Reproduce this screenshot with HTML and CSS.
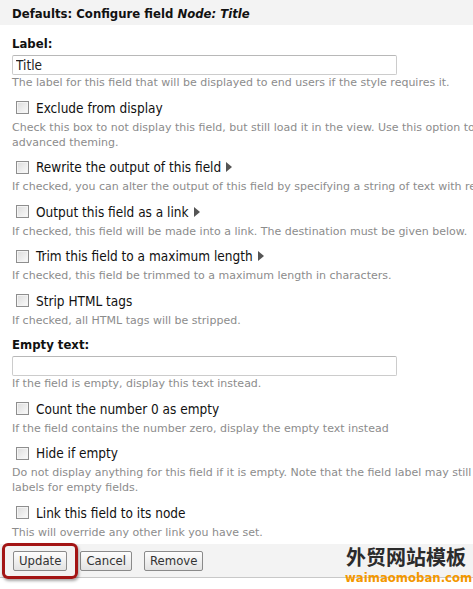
FILE: index.html
```html
<!DOCTYPE html>
<html>
<head>
  <meta charset="UTF-8">
  <title>Configure field</title>
  <link rel="stylesheet" href="styles.css">
</head>
<body>
  <div class="dialog">
    <div class="dialog-title">Defaults: Configure field <em>Node: Title</em></div>

    <div class="dialog-body">
      <div class="form-item">
        <label class="field-label">Label:</label>
        <input class="text-input" type="text" value="Title">
        <div class="help help-tight">The label for this field that will be displayed to end users if the style requires it.</div>
      </div>

      <div class="form-item">
        <label class="check-row"><span class="checkbox"></span>Exclude from display</label>
        <div class="help">Check this box to not display this field, but still load it in the view. Use this option to not show a grouping field in each record, or when doing<br>advanced theming.</div>
      </div>

      <div class="form-item">
        <label class="check-row"><span class="checkbox"></span>Rewrite the output of this field <span class="arrow"></span></label>
        <div class="help">If checked, you can alter the output of this field by specifying a string of text with replacement tokens that can use any existing field output.</div>
      </div>

      <div class="form-item">
        <label class="check-row"><span class="checkbox"></span>Output this field as a link <span class="arrow"></span></label>
        <div class="help">If checked, this field will be made into a link. The destination must be given below.</div>
      </div>

      <div class="form-item">
        <label class="check-row"><span class="checkbox"></span>Trim this field to a maximum length <span class="arrow"></span></label>
        <div class="help">If checked, this field be trimmed to a maximum length in characters.</div>
      </div>

      <div class="form-item">
        <label class="check-row"><span class="checkbox"></span>Strip HTML tags</label>
        <div class="help">If checked, all HTML tags will be stripped.</div>
      </div>

      <div class="form-item">
        <label class="field-label">Empty text:</label>
        <input class="text-input" type="text" value="">
        <div class="help help-tight">If the field is empty, display this text instead.</div>
      </div>

      <div class="form-item">
        <label class="check-row"><span class="checkbox"></span>Count the number 0 as empty</label>
        <div class="help">If the field contains the number zero, display the empty text instead</div>
      </div>

      <div class="form-item">
        <label class="check-row"><span class="checkbox"></span>Hide if empty</label>
        <div class="help">Do not display anything for this field if it is empty. Note that the field label may still be displayed. Check style or row style settings to hide<br>labels for empty fields.</div>
      </div>

      <div class="form-item">
        <label class="check-row"><span class="checkbox"></span>Link this field to its node</label>
        <div class="help">This will override any other link you have set.</div>
      </div>
    </div>

    <div class="dialog-buttons">
      <button class="btn btn-highlight">Update</button>
      <button class="btn">Cancel</button>
      <button class="btn">Remove</button>
      <div class="watermark">
        <div class="wm-cn">外贸网站模板</div>
        <div class="wm-en">waimaomoban.com</div>
      </div>
    </div>
  </div>
</body>
</html>
```

FILE: styles.css
```css
body {
  margin: 0;
  background: #fff;
  font-family: "DejaVu Sans Condensed", "DejaVu Sans", sans-serif;
  color: #111;
  overflow: hidden;
}

.dialog {
  width: 473px;
  height: 589px;
  overflow: hidden;
}

.dialog-title {
  height: 25px;
  line-height: 28px;
  background: #f3f3f3;
  padding-left: 12px;
  font-size: 13px;
  font-weight: bold;
  white-space: nowrap;
}

.dialog-body {
  padding: 10px 0 0 12px;
  height: 509px;
  overflow: hidden;
}

.form-item {
  margin-bottom: 8.5px;
}

.field-label {
  display: block;
  font-weight: bold;
  font-size: 13px;
  line-height: 18px;
}

.text-input {
  display: block;
  box-sizing: border-box;
  width: 385px;
  height: 20px;
  margin: 2px 0 0;
  padding: 0 3px;
  border: 1px solid #ccc;
  border-top-color: #b8b8b8;
  border-radius: 2px;
  font-family: "DejaVu Sans Condensed", "DejaVu Sans", sans-serif;
  font-size: 13.5px;
  color: #222;
}

.check-row {
  display: flex;
  align-items: center;
  height: 18px;
  font-size: 13.5px;
  white-space: nowrap;
}

.checkbox {
  box-sizing: border-box;
  width: 13px;
  height: 13px;
  margin: 0 7px 0 4px;
  border: 1px solid #8e8e8e;
  background: linear-gradient(135deg, #dcdcdc, #fbfbfb);
  box-shadow: inset 0 0 0 1px #f4f4f4;
}

.arrow {
  width: 0;
  height: 0;
  margin-left: 5px;
  border-top: 5px solid transparent;
  border-bottom: 5px solid transparent;
  border-left: 6px solid #555;
}

.help {
  margin-top: 3px;
  font-family: "DejaVu Sans", sans-serif;
  font-size: 11px;
  line-height: 15px;
  color: #8c8c8c;
  white-space: nowrap;
}

.help-tight {
  margin-top: 0;
}

.dialog-buttons {
  position: relative;
  height: 33px;
  background: #f3f3f3;
  border-bottom: 1px solid #c8c8c8;
  display: flex;
  align-items: center;
  gap: 12px;
  padding-left: 13px;
}

.btn {
  height: 20px;
  padding: 0 5px;
  border: 1px solid #8a8a8a;
  border-radius: 2px;
  background: linear-gradient(#fdfdfd, #e2e2e2);
  font-family: "DejaVu Sans Condensed", "DejaVu Sans", sans-serif;
  font-size: 13px;
  color: #333;
}

.btn-highlight {
  position: relative;
  margin-right: 1px;
}

.btn-highlight::after {
  content: "";
  position: absolute;
  left: -12px;
  top: -9px;
  right: -12px;
  bottom: -9px;
  border: 3px solid #a31515;
  border-radius: 6px;
  box-shadow: 1px 2px 3px rgba(0, 0, 0, 0.35);
}

.watermark {
  position: absolute;
  left: 345px;
  top: 3px;
  width: 122px;
  text-align: center;
  line-height: 1;
}

.wm-cn {
  font-family: "Noto Sans CJK SC", sans-serif;
  font-weight: bold;
  font-size: 20px;
  color: #2b2b2b;
  white-space: nowrap;
}

.wm-en {
  margin-top: 4px;
  font-family: "DejaVu Sans Condensed", "DejaVu Sans", sans-serif;
  font-weight: bold;
  font-size: 13px;
  color: #f39800;
  white-space: nowrap;
}
```
